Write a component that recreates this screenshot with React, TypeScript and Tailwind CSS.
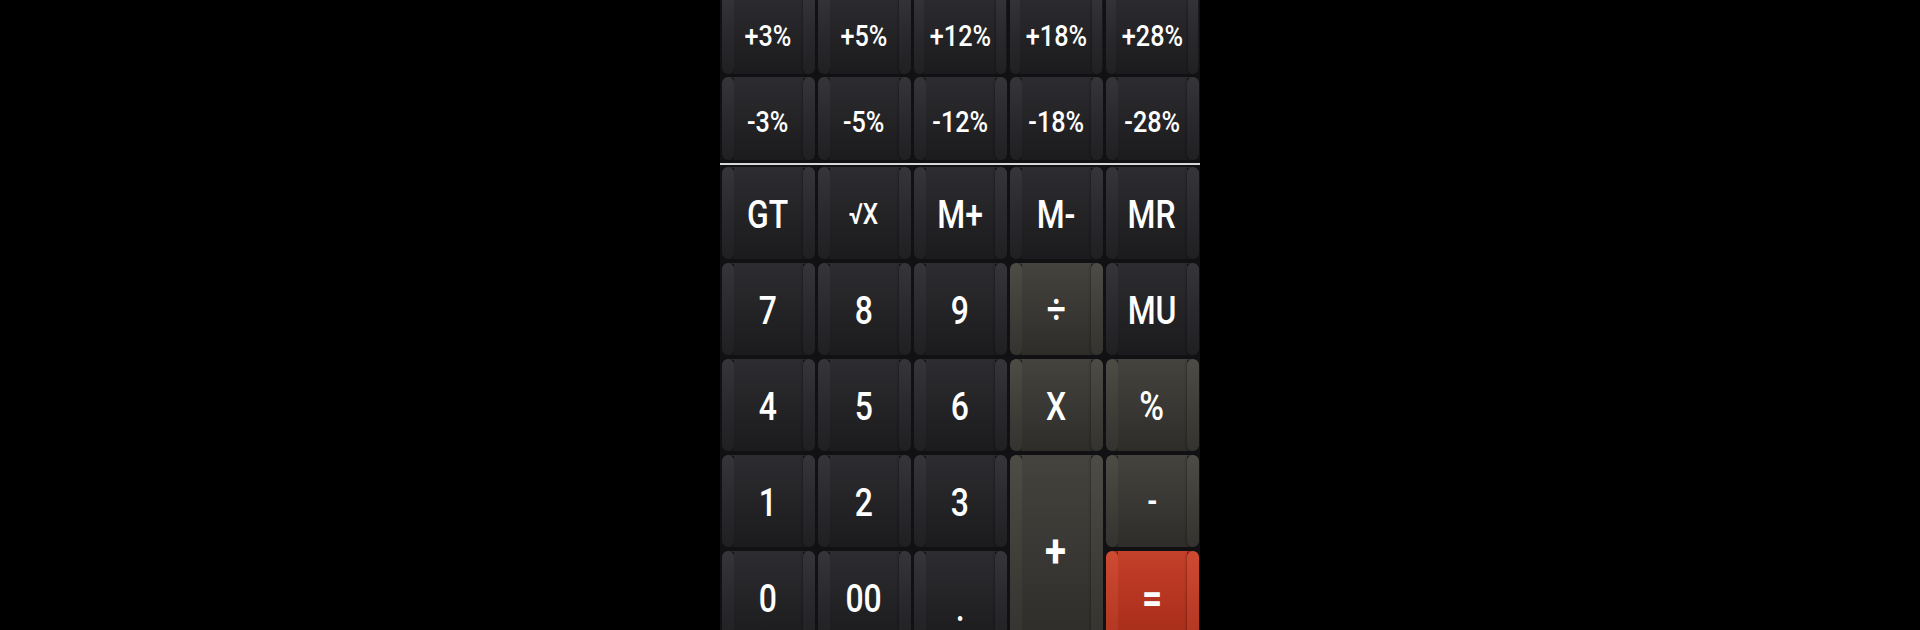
import React from 'react';

type Variant = 'dark' | 'op' | 'red';

interface KeyProps {
    label: string;
    variant?: Variant;
    text?: string;
    className?: string;
}

const tones: Record<Variant, { edge: string; face: string; side: string }> = {
    dark: {
        edge: 'bg-[#19191c]',
        face: 'bg-linear-to-b from-[#2d2d31] via-[#242427] to-[#1b1b1e]',
        side: 'bg-linear-to-b from-[#36363a] via-[#2a2a2e] to-[#202023]',
    },
    op: {
        edge: 'bg-[#2a2926]',
        face: 'bg-linear-to-b from-[#44433e] via-[#393834] to-[#2e2d2a]',
        side: 'bg-linear-to-b from-[#4d4c47] via-[#403f3a] to-[#34332f]',
    },
    red: {
        edge: 'bg-[#8e2616]',
        face: 'bg-linear-to-b from-[#c4402a] via-[#b53520] to-[#a52d1a]',
        side: 'bg-linear-to-b from-[#cf4b33] via-[#bf3f29] to-[#b03520]',
    },
};

const Key: React.FC<KeyProps> = ({ label, variant = 'dark', text = 'text-[38px] font-medium pt-[4px]', className = '' }) => {
    const t = tones[variant];
    return (
        <div className={`flex rounded-[6px] overflow-hidden shadow-[inset_0_1px_0_rgba(255,255,255,0.08)] ${t.edge} ${className}`}>
            <div className={`w-[12px] rounded-[7px] ${t.side} shadow-[1px_0_2px_rgba(0,0,0,0.25)]`} />
            <div className={`flex-1 flex items-center justify-center ${t.face}`}>
                <span className={`inline-block scale-x-[0.84] text-white font-['Roboto',sans-serif] leading-none ${text}`}>
                    {label}
                </span>
            </div>
            <div className={`w-[12px] rounded-[7px] ${t.side} shadow-[-1px_0_2px_rgba(0,0,0,0.25)]`} />
        </div>
    );
};

const percentRows = [
    ['+3%', '+5%', '+12%', '+18%', '+28%'],
    ['-3%', '-5%', '-12%', '-18%', '-28%'],
];

export default function App() {
    return (
        <div className="w-full h-[630px] bg-black flex justify-center overflow-hidden">
            <div className="w-[480px] h-[630px] bg-[#111113] overflow-hidden">
                {/* Tax percentage rows */}
                <div className="-mt-[9px] grid grid-cols-5 grid-rows-[83px_83px] gap-x-[3px] gap-y-[3px] px-[1.5px]">
                    {percentRows.flat().map(p => (
                        <Key key={p} label={p} text="text-[30px] font-medium pt-[6px]" />
                    ))}
                </div>

                <div className="mt-[3px] mb-[2px] h-[2px] bg-[#d8d8d8]" />

                {/* Main keypad */}
                <div className="grid grid-cols-5 grid-rows-[repeat(5,92px)] gap-x-[3px] gap-y-[4px] px-[1.5px]">
                    <Key label="GT" />
                    <Key label="√X" text="text-[29px] font-medium pt-[2px]" />
                    <Key label="M+" />
                    <Key label="M-" />
                    <Key label="MR" />

                    <Key label="7" />
                    <Key label="8" />
                    <Key label="9" />
                    <Key label="÷" variant="op" text="text-[40px] font-medium pt-[2px]" />
                    <Key label="MU" />

                    <Key label="4" />
                    <Key label="5" />
                    <Key label="6" />
                    <Key label="X" variant="op" />
                    <Key label="%" variant="op" text="text-[40px] font-medium pt-[4px]" />

                    <Key label="1" />
                    <Key label="2" />
                    <Key label="3" />
                    <Key label="+" variant="op" text="text-[46px] font-bold pt-[4px]" className="row-span-2" />
                    <Key label="-" variant="op" text="text-[32px] font-bold" />

                    <Key label="0" />
                    <Key label="00" />
                    <Key label="." text="text-[38px] font-medium pt-[22px]" />
                    <Key label="=" variant="red" text="text-[42px] font-bold pt-[4px]" />
                </div>
            </div>
        </div>
    );
}
